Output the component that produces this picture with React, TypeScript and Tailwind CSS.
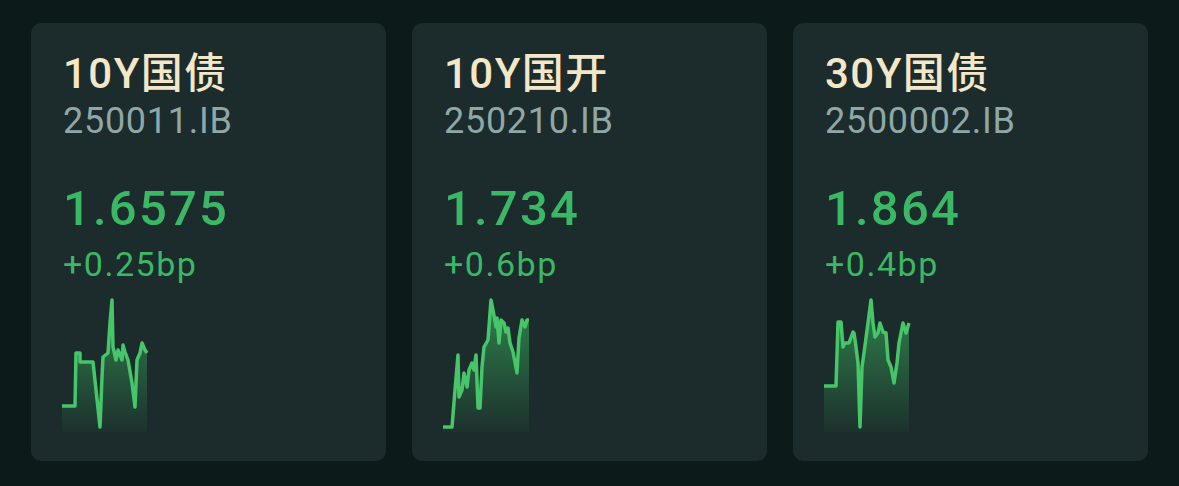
import React from "react";

type Bond = {
  name: string;
  code: string;
  yield: string;
  change: string;
  points: [number, number][];
};

const bonds: Bond[] = [
  {
    name: "10Y国债",
    code: "250011.IB",
    yield: "1.6575",
    change: "+0.25bp",
    points: [
      [1, 110], [14, 110], [15, 57], [19, 57], [19, 66], [32, 66], [39, 131],
      [41, 81], [42, 61], [47, 57], [49, 27], [51, 4], [52, 51], [55, 64],
      [57, 54], [61, 64], [62, 49], [64, 56], [67, 64], [71, 87], [74, 111],
      [76, 64], [79, 57], [81, 47], [84, 54], [86, 57],
    ],
  },
  {
    name: "10Y国开",
    code: "250210.IB",
    yield: "1.734",
    change: "+0.6bp",
    points: [
      [1, 131], [10, 131], [13, 94], [16, 59], [17, 101], [20, 94], [22, 77],
      [25, 91], [27, 74], [30, 67], [32, 74], [34, 59], [36, 112], [38, 112],
      [40, 71], [42, 51], [46, 44], [49, 4], [51, 14], [54, 31], [55, 22],
      [57, 47], [59, 24], [62, 27], [64, 36], [66, 32], [68, 47], [71, 56],
      [75, 77], [77, 42], [80, 24], [83, 31], [85, 24], [87, 24],
    ],
  },
  {
    name: "30Y国债",
    code: "2500002.IB",
    yield: "1.864",
    change: "+0.4bp",
    points: [
      [1, 90], [13, 90], [15, 26], [18, 26], [20, 51], [22, 47], [26, 47],
      [30, 36], [31, 37], [33, 51], [35, 67], [37, 131], [39, 71], [41, 57],
      [45, 27], [48, 4], [50, 27], [52, 41], [55, 37], [57, 27], [60, 36],
      [63, 37], [65, 64], [68, 71], [71, 87], [74, 67], [76, 47], [80, 27],
      [83, 37], [86, 27],
    ],
  },
];

const Sparkline = ({ points, id }: { points: [number, number][]; id: string }) => {
  const line = points.map(([x, y], i) => `${i ? "L" : "M"}${x} ${y}`).join(" ");
  const first = points[0][0];
  const last = points[points.length - 1][0];
  const area = `${line} L${last} 136 L${first} 136 Z`;

  return (
    <svg width="90" height="136" viewBox="0 0 90 136" className="-ml-[2px] overflow-visible">
      <defs>
        <linearGradient id={id} x1="0" y1="0" x2="0" y2="1">
          <stop offset="0%" stopColor="#3cbf63" stopOpacity="0.6" />
          <stop offset="100%" stopColor="#3cbf63" stopOpacity="0.04" />
        </linearGradient>
      </defs>
      <path d={area} fill={`url(#${id})`} />
      <path d={line} fill="none" stroke="#46c569" strokeWidth="3.5" strokeLinejoin="round" />
    </svg>
  );
};

const BondCard = ({ bond, index }: { bond: Bond; index: number }) => {
  return (
    <div className="h-[438px] rounded-[10px] bg-[#1c2b2b] px-8 pt-[26px] flex flex-col">
      {/* NAME + CODE */}
      <h3 className="text-[42px] leading-[50px] font-medium tracking-[0.035em] text-[#f4e7c8]">
        {bond.name}
      </h3>
      <p className="mt-[2px] text-[36px] leading-[40px] tracking-[0.02em] text-[#8ea8a7]">
        {bond.code}
      </p>

      {/* YIELD + CHANGE */}
      <p className="mt-[40px] text-[49px] leading-[56px] font-medium tracking-[0.045em] text-[#3bb866]">
        {bond.yield}
      </p>
      <p className="mt-[7px] text-[34px] leading-[40px] tracking-[0.045em] text-[#3bb866]">
        {bond.change}
      </p>

      {/* CHART */}
      <div className="mt-[12px]">
        <Sparkline points={bond.points} id={`spark-${index}`} />
      </div>
    </div>
  );
};

export default function App() {
  return (
    <div
      className="w-[1179px] h-[486px] bg-[#0c1a1a] pt-[23px] px-[31px] grid grid-cols-3 gap-[26px] items-start"
      style={{ fontFamily: 'Roboto, "Noto Sans CJK SC", sans-serif' }}
    >
      {bonds.map((bond, i) => (
        <BondCard key={bond.code} bond={bond} index={i} />
      ))}
    </div>
  );
}
